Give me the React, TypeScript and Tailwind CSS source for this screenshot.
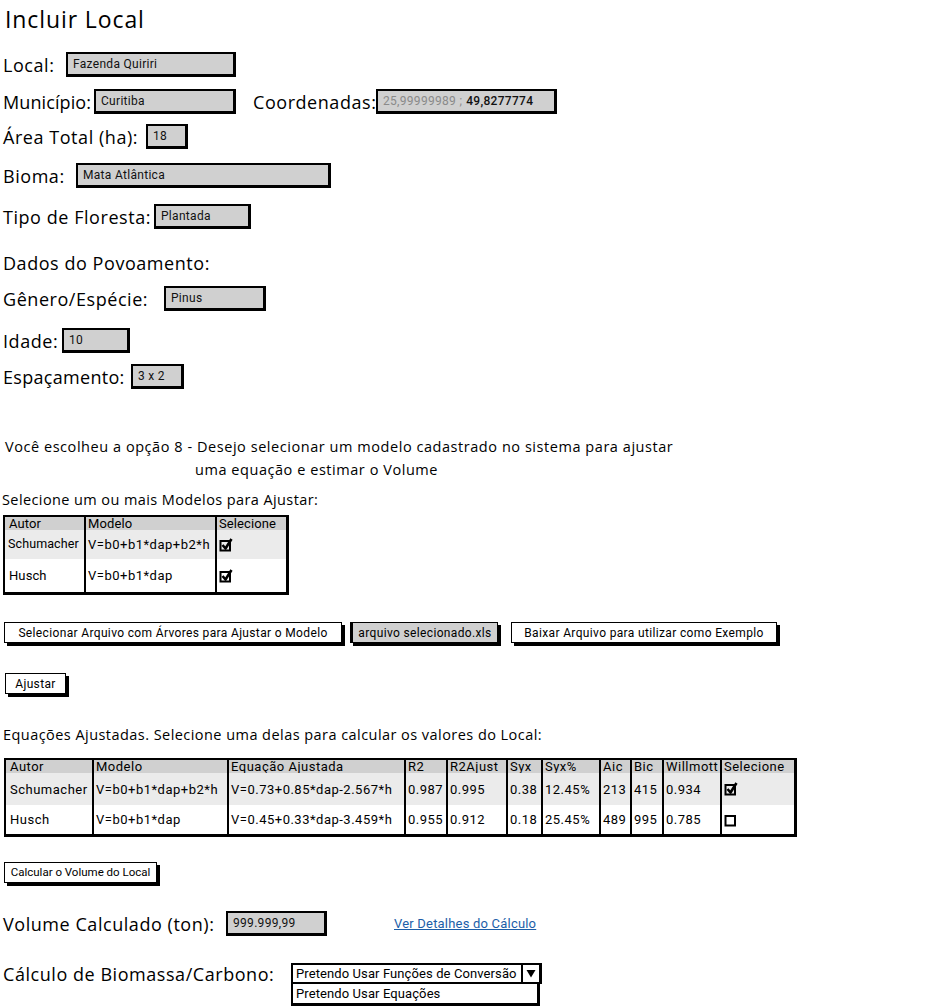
import React from "react";

function Input({ className, children }: { className: string; children: React.ReactNode }) {
  return (
    <div
      className={
        "h-[25px] border-2 border-r-[3px] border-b-[3px] border-black bg-[#d0d0d0] flex items-center pl-[5px] text-[12px] tracking-[0.3px] leading-none font-['Roboto',sans-serif] text-[#111] whitespace-nowrap " +
        className
      }
    >
      {children}
    </div>
  );
}

function Btn({ className, t, children }: { className: string; t: string; children: React.ReactNode }) {
  return (
    <div
      className={
        "h-[21px] border-[1.5px] border-black shadow-[3px_3px_0_#000] flex items-center justify-center leading-none font-['Roboto',sans-serif] whitespace-nowrap " +
        t +
        " " +
        className
      }
    >
      {children}
    </div>
  );
}

function Check({ checked }: { checked: boolean }) {
  return (
    <svg width="14" height="14" viewBox="0 0 14 14">
      <rect x="1.5" y="3" width="9.5" height="9.5" fill="none" stroke="#000" strokeWidth="2" />
      {checked && (
        <path d="M3.5 7 L6.5 10.5 L12.5 1" fill="none" stroke="#000" strokeWidth="2.6" strokeLinejoin="round" />
      )}
    </svg>
  );
}

function Label({ className, tr, children }: { className: string; tr?: string; children: React.ReactNode }) {
  return (
    <div className={"pl-[3px] text-[18px] leading-none whitespace-nowrap " + (tr ?? "tracking-[0.55px]") + " " + className}>
      {children}
    </div>
  );
}

export default function App() {
  const t2cols = [
    "w-[86px]",
    "w-[135px] border-l-2",
    "w-[177px] border-l-2",
    "w-[42px] border-l-2",
    "w-[60px] border-l-2",
    "w-[35px] border-l-2",
    "w-[58px] border-l-2",
    "w-[31px] border-l-2",
    "w-[32px] border-l-2",
    "w-[58px] border-l-2",
    "flex-1 border-l-2",
  ];
  const t2rows: { bg: string; h: string; cells: (string | React.ReactNode)[] }[] = [
    {
      bg: "bg-[#d0d0d0]",
      h: "h-[13px]",
      cells: ["Autor", "Modelo", "Equação Ajustada", "R2", "R2Ajust", "Syx", "Syx%", "Aic", "Bic", "Willmott", "Selecione"],
    },
    {
      bg: "bg-[#ebebeb]",
      h: "h-[32px]",
      cells: [
        "Schumacher",
        "V=b0+b1*dap+b2*h",
        "V=0.73+0.85*dap-2.567*h",
        "0.987",
        "0.995",
        "0.38",
        "12.45%",
        "213",
        "415",
        "0.934",
        <Check checked />,
      ],
    },
    {
      bg: "bg-white",
      h: "h-[29px]",
      cells: [
        "Husch",
        "V=b0+b1*dap",
        "V=0.45+0.33*dap-3.459*h",
        "0.955",
        "0.912",
        "0.18",
        "25.45%",
        "489",
        "995",
        "0.785",
        <Check checked={false} />,
      ],
    },
  ];

  return (
    <div className="w-[926px] h-[1007px] bg-white text-black font-['Open_Sans',sans-serif] overflow-hidden">
      <div className="h-[38px] flex items-center pl-[5px] text-[23px] tracking-[0.9px] leading-none">Incluir Local</div>

      {/* Local */}
      <div className="mt-[14px] h-[25px] flex items-center">
        <Label className="w-[66px]">Local:</Label>
        <Input className="w-[170px]">Fazenda Quiriri</Input>
      </div>

      {/* Município / Coordenadas */}
      <div className="mt-[12px] h-[25px] flex items-center">
        <Label className="w-[94px]" tr="tracking-[0.1px]">
          Município:
        </Label>
        <Input className="w-[142px]">Curitiba</Input>
        <Label className="w-[126px] ml-[14px]">Coordenadas:</Label>
        <Input className="w-[181px]">
          <span className="text-[#8a8a8a]">25,99999989 ;</span>
          <span className="ml-[4px] font-medium">49,8277774</span>
        </Input>
      </div>

      {/* Área */}
      <div className="mt-[10px] h-[25px] flex items-center">
        <Label className="w-[146px]">Área Total (ha):</Label>
        <Input className="w-[42px]">18</Input>
      </div>

      {/* Bioma */}
      <div className="mt-[14px] h-[25px] flex items-center">
        <Label className="w-[76px]">Bioma:</Label>
        <Input className="w-[255px]">Mata Atlântica</Input>
      </div>

      {/* Tipo */}
      <div className="mt-[16px] h-[25px] flex items-center">
        <Label className="w-[154px]">Tipo de Floresta:</Label>
        <Input className="w-[97px]">Plantada</Input>
      </div>

      <div className="mt-[22px] h-[24px] flex items-center">
        <Label className="">Dados do Povoamento:</Label>
      </div>

      <div className="mt-[11px] h-[25px] flex items-center">
        <Label className="w-[164px]">Gênero/Espécie:</Label>
        <Input className="w-[102px]">Pinus</Input>
      </div>

      <div className="mt-[17px] h-[25px] flex items-center">
        <Label className="w-[62px]">Idade:</Label>
        <Input className="w-[68px]">10</Input>
      </div>

      <div className="mt-[11px] h-[25px] flex items-center">
        <Label className="w-[131px]" tr="tracking-[0.3px]">
          Espaçamento:
        </Label>
        <Input className="w-[53px]">3 x 2</Input>
      </div>

      {/* paragraph */}
      <div className="mt-[46px] text-[14.5px] tracking-[0.55px] leading-[23px] whitespace-nowrap">
        <div className="h-[23px] pl-[5px]">Você escolheu a opção 8 - Desejo selecionar um modelo cadastrado no sistema para ajustar</div>
        <div className="h-[23px] pl-[195px]">uma equação e estimar o Volume</div>
      </div>

      <div className="mt-[9px] h-[20px] flex items-center pl-[2px] text-[14.5px] tracking-[0.4px] leading-none whitespace-nowrap">
        Selecione um ou mais Modelos para Ajustar:
      </div>

      {/* Table 1 */}
      <div className="ml-[3px] mt-[5px] w-[286px] border-2 border-r-[3px] border-b-[3px] border-black text-[13px] tracking-[0.1px] leading-none font-['Roboto',sans-serif]">
        <div className="flex h-[13px] bg-[#d0d0d0] items-stretch">
          <div className="w-[79px] pl-[4px] flex items-center">Autor</div>
          <div className="w-[131px] border-l-2 border-black pl-[2px] flex items-center">Modelo</div>
          <div className="flex-1 border-l-2 border-black pl-[2px] flex items-center">Selecione</div>
        </div>
        <div className="flex h-[29px] bg-[#ebebeb] items-stretch">
          <div className="w-[79px] pl-[3px] flex items-center text-[12.5px]">Schumacher</div>
          <div className="w-[131px] border-l-2 border-black pl-[2px] flex items-center tracking-[0.5px]">V=b0+b1*dap+b2*h</div>
          <div className="flex-1 border-l-2 border-black pl-[2px] flex items-center">
            <Check checked />
          </div>
        </div>
        <div className="flex h-[33px] bg-white items-stretch">
          <div className="w-[79px] pl-[4px] flex items-center">Husch</div>
          <div className="w-[131px] border-l-2 border-black pl-[2px] flex items-center tracking-[0.5px]">V=b0+b1*dap</div>
          <div className="flex-1 border-l-2 border-black pl-[2px] flex items-center">
            <Check checked />
          </div>
        </div>
      </div>

      {/* buttons */}
      <div className="mt-[27px] h-[21px] flex items-center">
        <Btn t="text-[12px] tracking-[0.35px]" className="ml-[4px] w-[338px] bg-white">
          Selecionar Arquivo com Árvores para Ajustar o Modelo
        </Btn>
        <Btn t="text-[12px] tracking-[0.35px]" className="ml-[8px] w-[148px] bg-[#d0d0d0] border-l-[3px]">
          arquivo selecionado.xls
        </Btn>
        <Btn t="text-[12px] tracking-[0.35px]" className="ml-[13px] w-[266px] bg-white">
          Baixar Arquivo para utilizar como Exemplo
        </Btn>
      </div>

      <div className="mt-[30px] h-[21px] flex">
        <Btn t="text-[12px] tracking-[0.35px]" className="ml-[5px] w-[61px] bg-white">
          Ajustar
        </Btn>
      </div>

      <div className="mt-[31px] h-[20px] flex items-center pl-[3px] text-[14.5px] tracking-[0.45px] leading-none whitespace-nowrap">
        Equações Ajustadas. Selecione uma delas para calcular os valores do Local:
      </div>

      {/* Table 2 */}
      <div className="ml-[4px] mt-[13px] w-[793px] border-2 border-r-[3px] border-b-[3px] border-black text-[13px] tracking-[0.5px] leading-none font-['Roboto',sans-serif]">
        {t2rows.map((r, ri) => (
          <div key={ri} className={"flex " + r.h + " " + r.bg}>
            {r.cells.map((c, ci) => (
              <div
                key={ci}
                className={
                  t2cols[ci] +
                  " border-black flex items-center whitespace-nowrap overflow-hidden " +
                  (ci === 0 ? "pl-[4px]" : "pl-[2px]")
                }
              >
                {c}
              </div>
            ))}
          </div>
        ))}
      </div>

      <div className="mt-[25px] h-[21px] flex">
        <Btn t="text-[11.5px] tracking-[0px]" className="ml-[4px] w-[153px] bg-white">
          Calcular o Volume do Local
        </Btn>
      </div>

      {/* Volume */}
      <div className="mt-[28px] h-[25px] flex items-center">
        <Label className="w-[226px]">Volume Calculado (ton):</Label>
        <Input className="w-[101px]">999.999,99</Input>
        <a
          className="ml-[67px] text-[13px] tracking-[0.2px] leading-none text-[#1c5ea8] underline font-['Roboto',sans-serif] whitespace-nowrap"
          href="#"
        >
          Ver Detalhes do Cálculo
        </a>
      </div>

      {/* Biomassa */}
      <div className="mt-[27px] flex items-start">
        <div className="h-[21px] w-[291px] flex items-center">
          <Label className="">Cálculo de Biomassa/Carbono:</Label>
        </div>
        <div className="w-[251px] font-['Roboto',sans-serif] text-[13px] tracking-[0.1px] leading-none whitespace-nowrap">
          <div className="flex h-[21px] border-2 border-r-[3px] border-black bg-white">
            <div className="flex-1 flex items-center pl-[3px]">Pretendo Usar Funções de Conversão</div>
            <div className="w-[18px] border-l-2 border-black flex items-center justify-center">
              <svg width="10" height="9" viewBox="0 0 10 9">
                <path d="M0.5 1 L9.5 1 L5 8.5 Z" fill="#000" />
              </svg>
            </div>
          </div>
          <div className="h-[22px] w-[249px] border-2 border-t-0 border-r-[3px] border-b-[3px] border-black bg-white flex items-center pl-[3px]">
            Pretendo Usar Equações
          </div>
        </div>
      </div>
    </div>
  );
}
